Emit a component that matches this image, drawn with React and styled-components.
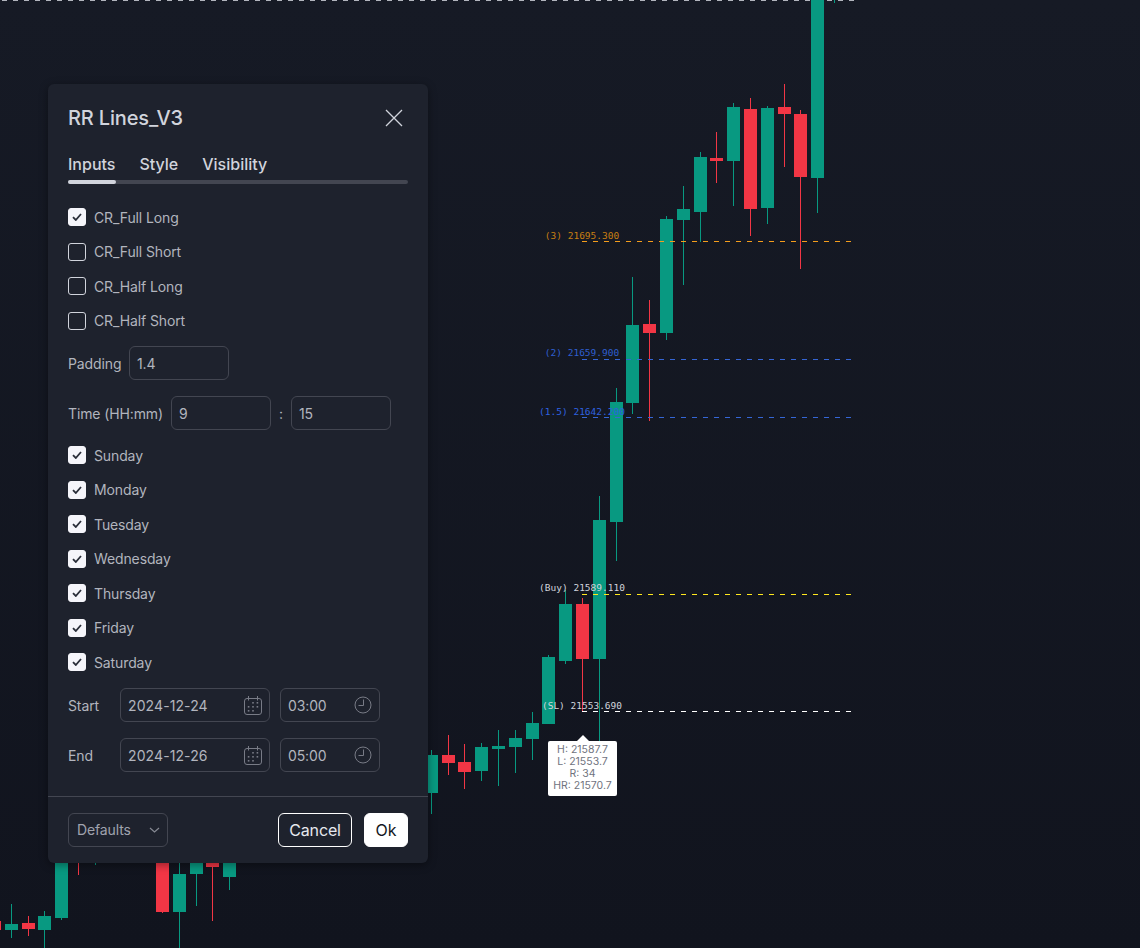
import React from 'react';
import styled, { createGlobalStyle } from 'styled-components';

const GlobalStyle = createGlobalStyle`
  html, body {
    margin: 0;
    padding: 0;
    height: 100%;
    background: #131722;
  }
  * { box-sizing: border-box; }
`

const UP = '#089981';
const DOWN = '#f23645';

// [left, wickTop, wickBottom, bodyTop, bodyBottom, colour]
const candles = [
  [-12, 918, 932, 921, 930, DOWN],
  [5, 904, 938, 924, 930, UP],
  [22, 916, 936, 923, 929, DOWN],
  [38, 911, 948, 916, 930, UP],
  [55, 850, 920, 850, 918, UP],
  [72, 850, 875, 850, 851, DOWN],
  [89, 850, 865, 850, 851, UP],
  [156, 850, 913, 850, 912, DOWN],
  [173, 850, 948, 874, 912, UP],
  [190, 850, 906, 850, 874, UP],
  [206, 850, 921, 850, 867, DOWN],
  [223, 850, 890, 850, 877, UP],
  [425, 750, 814, 755, 793, UP],
  [442, 735, 775, 755, 763, DOWN],
  [458, 744, 789, 762, 772, DOWN],
  [475, 743, 781, 747, 771, UP],
  [492, 730, 786, 746, 749, UP],
  [509, 730, 773, 738, 747, UP],
  [526, 712, 760, 723, 739, UP],
  [542, 655, 724, 657, 724, UP],
  [559, 590, 664, 604, 661, UP],
  [576, 598, 711, 604, 659, DOWN],
  [593, 496, 741, 520, 659, UP],
  [610, 388, 561, 402, 522, UP],
  [626, 277, 414, 325, 403, UP],
  [643, 300, 421, 324, 333, DOWN],
  [660, 216, 340, 219, 333, UP],
  [677, 186, 285, 209, 220, UP],
  [694, 152, 242, 157, 212, UP],
  [710, 132, 183, 158, 161, DOWN],
  [727, 103, 206, 107, 161, UP],
  [744, 98, 236, 109, 209, DOWN],
  [761, 106, 224, 108, 208, UP],
  [778, 84, 167, 107, 114, DOWN],
  [794, 110, 269, 114, 177, DOWN],
  [811, 0, 213, 0, 178, UP],
  [828, 0, 3, 0, 0, UP],
];

const levels = [
  { y: 241, stroke: '#f59d1c', fill: '#c87f12', text: '(3) 21695.300', textY: 239 },
  { y: 359, stroke: '#3566d6', fill: '#2f5fd0', text: '(2) 21659.900', textY: 356 },
  { y: 417, stroke: '#3566d6', fill: '#2f62e0', text: '(1.5) 21642.200', textY: 415 },
  { y: 594, stroke: '#ffe81e', fill: '#d1d4dc', text: '(Buy) 21589.110', textY: 591 },
  { y: 711, stroke: '#ffffff', fill: '#d1d4dc', text: '(SL) 21553.690', textY: 709 },
];

const checks = [
  ['CR_Full Long', true],
  ['CR_Full Short', false],
  ['CR_Half Long', false],
  ['CR_Half Short', false],
];

const days = ['Sunday', 'Monday', 'Tuesday', 'Wednesday', 'Thursday', 'Friday', 'Saturday'];

const Page = styled.div`
  position: relative;
  width: 1140px;
  height: 948px;
  overflow: hidden;
  background: linear-gradient(180deg, #161a25 0%, #11141e 100%);
  font-family: Inter, "Liberation Sans", sans-serif;
`

const Chart = styled.svg`
  position: absolute;
  inset: 0;
  display: block;
`

const Label = styled.text`
  font-family: "DejaVu Sans Mono", monospace;
  font-size: 9.5px;
  text-anchor: middle;
`

const Tooltip = styled.div`
  position: absolute;
  left: 548px;
  top: 741px;
  width: 69px;
  height: 55px;
  padding-top: 2.5px;
  background: #fff;
  border-radius: 2px;
  color: #70737e;
  font-size: 10.5px;
  line-height: 12px;
  text-align: center;
  white-space: nowrap;

  &::before {
    content: '';
    position: absolute;
    left: 29px;
    top: -6px;
    border-left: 6px solid transparent;
    border-right: 6px solid transparent;
    border-bottom: 6px solid #fff;
  }
`

const Panel = styled.div`
  position: absolute;
  left: 48px;
  top: 84px;
  width: 380px;
  height: 779px;
  display: flex;
  flex-direction: column;
  background: #1e222d;
  border-radius: 6px;
  box-shadow: 0 2px 8px rgba(0, 0, 0, 0.4);
  color: #b2b5be;
  font-size: 14px;
  letter-spacing: -0.12px;
`

const Header = styled.div`
  display: flex;
  align-items: center;
  justify-content: space-between;
  height: 24px;
  margin: 22px 24px 0 20px;
`

const Title = styled.div`
  color: #d1d4dc;
  font-size: 20px;
  font-weight: 500;
  letter-spacing: -0.15px;
  white-space: nowrap;
`

const Close = styled.button`
  display: flex;
  width: 20px;
  height: 20px;
  padding: 0;
  border: 0;
  background: none;
  color: #d1d4dc;
`

const Tabs = styled.div`
  display: flex;
  gap: 24px;
  height: 24px;
  margin: 23px 20px 0;
`

const Tab = styled.div`
  color: #d1d4dc;
  font-size: 16px;
  font-weight: 500;
  line-height: 22px;
  letter-spacing: 0;
`

const Track = styled.div`
  height: 4px;
  margin: 3px 20px 0;
  border-radius: 2px;
  background: #434651;
`

const Thumb = styled.div`
  width: 48px;
  height: 4px;
  border-radius: 2px;
  background: #d1d4dc;
`

const Body = styled.div`
  display: flex;
  flex-direction: column;
  padding: 23px 20px 0;
`

const CheckRow = styled.label`
  display: flex;
  align-items: center;
  gap: 8px;
  height: 20px;
  margin-bottom: 14.5px;
  white-space: nowrap;
`

const Box = styled.span`
  display: flex;
  align-items: center;
  justify-content: center;
  width: 18px;
  height: 18px;
  border-radius: 3px;
  border: 1px solid ${props => (props.$on ? '#f5f5fa' : '#d1d4dc')};
  background: ${props => (props.$on ? '#f5f5fa' : 'transparent')};
`

const FieldRow = styled.div`
  display: flex;
  align-items: center;
  height: 34px;
  margin-top: ${props => props.$before || 0}px;
  margin-bottom: ${props => props.$after || 16}px;
  white-space: nowrap;
`

const FieldLabel = styled.span`
  width: ${props => props.$width}px;
  flex: none;
`

const Field = styled.div`
  display: flex;
  align-items: center;
  justify-content: space-between;
  width: ${props => props.$width}px;
  height: 34px;
  flex: none;
  padding: 0 7px;
  border: 1px solid #434651;
  border-radius: 6px;
  color: #b2b5be;
`

const DateText = styled.span`
  letter-spacing: 0.1px;
`

const Sep = styled.span`
  width: 20px;
  text-align: center;
`

const Gap = styled.span`
  width: 10px;
  flex: none;
`

const Footer = styled.div`
  display: flex;
  align-items: center;
  justify-content: space-between;
  height: 67px;
  margin-top: auto;
  padding: 0 20px;
  border-top: 1px solid #434651;
`

const Select = styled.div`
  display: flex;
  align-items: center;
  justify-content: space-between;
  width: 100px;
  height: 34px;
  padding: 0 7px 0 8px;
  border: 1px solid #434651;
  border-radius: 6px;
  color: #a0a3ae;
  line-height: 32px;
`

const Actions = styled.div`
  display: flex;
  gap: 12px;
`

const Button = styled.button`
  height: 34px;
  width: ${props => props.$width}px;
  padding: 0;
  border: 1px solid #fff;
  border-radius: 6px;
  background: ${props => (props.$primary ? '#fff' : 'transparent')};
  color: ${props => (props.$primary ? '#131722' : '#e6e8ef')};
  font-family: inherit;
  font-size: 16px;
  letter-spacing: -0.12px;
`

const Tick = () => (
  <svg width="10" height="8" viewBox="0 0 10 8" fill="none" stroke="#2a2e39" strokeWidth="1.8">
    <path d="M1 4.2 3.8 7 9 1" />
  </svg>
);

const CalendarIcon = () => (
  <svg width="18" height="19" viewBox="0 0 18 19" fill="none" stroke="#787b86">
    <rect x="0.5" y="2.5" width="17" height="16" rx="2.5" />
    <path d="M4.5 0v4.5M13.5 0v4.5" />
    <g fill="#787b86" stroke="none">
      <rect x="8.2" y="6" width="1.6" height="1.6" />
      <rect x="12.6" y="6" width="1.6" height="1.6" />
      <rect x="3.8" y="10" width="1.6" height="1.6" />
      <rect x="8.2" y="10" width="1.6" height="1.6" />
      <rect x="12.6" y="10" width="1.6" height="1.6" />
      <rect x="3.8" y="14" width="1.6" height="1.6" />
      <rect x="8.2" y="14" width="1.6" height="1.6" />
    </g>
  </svg>
);

const ClockIcon = () => (
  <svg width="18" height="18" viewBox="0 0 18 18" fill="none" stroke="#787b86">
    <circle cx="9" cy="9" r="8" />
    <path d="M9.5 3.5v6H4.5" />
  </svg>
);

const Chevron = () => (
  <svg width="11" height="6" viewBox="0 0 11 6" fill="none" stroke="#868993" strokeWidth="1.2">
    <path d="M1 1 5.5 5 10 1" />
  </svg>
);

const CheckItem = ({ text, on }) => (
  <CheckRow>
    <Box $on={on}>{on && <Tick />}</Box>
    {text}
  </CheckRow>
);

const DateRow = ({ label, date, time, before }) => (
  <FieldRow $before={before}>
    <FieldLabel $width={52}>{label}</FieldLabel>
    <Field $width={150}>
      <DateText>{date}</DateText>
      <CalendarIcon />
    </Field>
    <Gap />
    <Field $width={100}>
      {time}
      <ClockIcon />
    </Field>
  </FieldRow>
);

const App = () => (
  <Page>
    <GlobalStyle />
    <Chart width="1140" height="948" viewBox="0 0 1140 948">
      <line x1="-9" y1="0.5" x2="855" y2="0.5" stroke="#b2b5be" strokeDasharray="5 6" />
      {candles.map(([left, wickTop, wickBottom, bodyTop, bodyBottom, colour]) => (
        <g key={left} fill={colour}>
          <rect x={left + 6} y={wickTop} width="1" height={wickBottom - wickTop} />
          <rect x={left} y={bodyTop} width="13" height={bodyBottom - bodyTop} />
        </g>
      ))}
      {levels.map(level => (
        <g key={level.text}>
          <line x1="582" y1={level.y + 0.5} x2="852" y2={level.y + 0.5} stroke={level.stroke} strokeDasharray="5 6" />
          <Label x="582" y={level.textY} fill={level.fill}>{level.text}</Label>
        </g>
      ))}
    </Chart>

    <Tooltip>
      <div>H: 21587.7</div>
      <div>L: 21553.7</div>
      <div>R: 34</div>
      <div>HR: 21570.7</div>
    </Tooltip>

    <Panel>
      <Header>
        <Title>RR Lines_V3</Title>
        <Close>
          <svg width="20" height="20" viewBox="0 0 20 20" fill="none" stroke="currentColor" strokeWidth="1.3">
            <path d="M2 2l16 16M18 2 2 18" />
          </svg>
        </Close>
      </Header>
      <Tabs>
        <Tab>Inputs</Tab>
        <Tab>Style</Tab>
        <Tab>Visibility</Tab>
      </Tabs>
      <Track>
        <Thumb />
      </Track>
      <Body>
        {checks.map(([text, on]) => <CheckItem key={text} text={text} on={on} />)}
        <FieldRow $before={1}>
          <FieldLabel $width={61}>Padding</FieldLabel>
          <Field $width={100}>1.4</Field>
        </FieldRow>
        <FieldRow $after={15}>
          <FieldLabel $width={103}>Time (HH:mm)</FieldLabel>
          <Field $width={100}>9</Field>
          <Sep>:</Sep>
          <Field $width={100}>15</Field>
        </FieldRow>
        {days.map(day => <CheckItem key={day} text={day} on />)}
        <DateRow label="Start" date="2024-12-24" time="03:00" before={1.5} />
        <DateRow label="End" date="2024-12-26" time="05:00" />
      </Body>
      <Footer>
        <Select>
          Defaults
          <Chevron />
        </Select>
        <Actions>
          <Button $width={74}>Cancel</Button>
          <Button $width={44} $primary>Ok</Button>
        </Actions>
      </Footer>
    </Panel>
  </Page>
);

export default App;
